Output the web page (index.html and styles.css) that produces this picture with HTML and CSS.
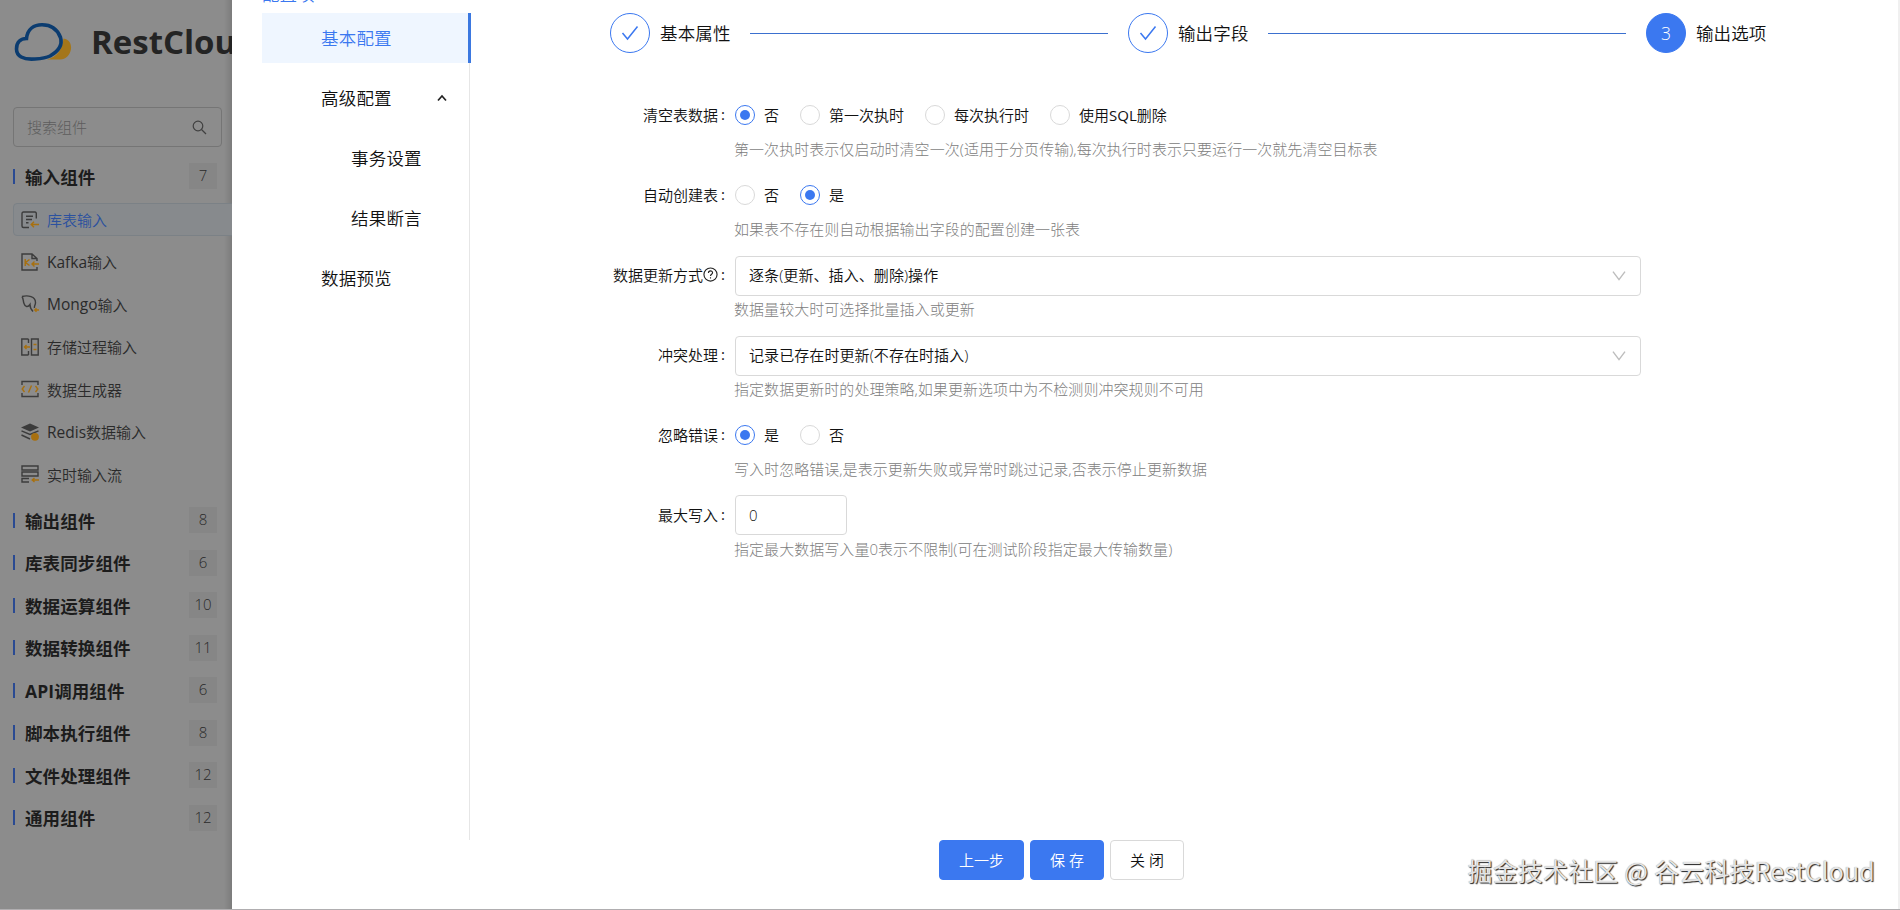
FILE: index.html
```html
<!DOCTYPE html>
<html lang="zh-CN">
<head>
<meta charset="utf-8">
<title>RestCloud</title>
<link rel="stylesheet" href="styles.css">
</head>
<body>
<div class="app">
  <aside class="sidebar">
    <div class="brand">
      <svg class="brand-mark" width="60" height="42" viewBox="0 0 60 42" fill="none">
        <path d="M34 38.500C44 36 49 29 50.500 17.500C56 18 58.500 23 58 28C57 34 53 38.500 47 38.500Z" fill="#a4761a"/>
        <path d="M22 38C10 39 3.500 35 3.500 28C3.500 21 8 17.500 13.500 17.500C14.500 8 21 3.800 29 3.800C38 3.800 44.500 8.500 47.500 16.500C50 25 44 31 37 35C33 37 28 37.600 22 38Z" stroke="#0b3c70" stroke-width="3.6"/>
      </svg>
      <span class="brand-name">RestCloud</span>
    </div>
    <div class="search">
      <span>搜索组件</span>
      <svg width="15" height="15" viewBox="0 0 15 15" fill="none" stroke="#404040" stroke-width="1.2"><circle cx="6" cy="6" r="4.8"/><path d="M9.500 9.500L14 14"/></svg>
    </div>
    <div class="group"><span class="group-name">输入组件</span><span class="badge">7</span></div>
    <ul class="items">
      <li class="item active"><svg class="ico" viewBox="0 0 18 18"><path d="M15.300 7.500V2.500Q15.300 1 14 1H2.500Q1 1 1 2.500V15Q1 16.500 2.500 16.500H8"/><path d="M5 5.200H12M5 8.500H11M5 11.800H7.500"/><path class="o" d="M18 13.500H10M13 10.800L10.200 13.500L13 16.200"/></svg>库表输入</li>
      <li class="item"><svg class="ico" viewBox="0 0 18 18"><path d="M16 8V5.500L11 1H1V17H16V14M11 1V5.500H16"/><path class="o" d="M4.200 6V13M8.500 6.500L4.500 9.500L8.500 12.500M18 11H11M13.500 8.500L11 11L13.500 13.500"/></svg><span class="latin">Kafka</span>输入</li>
      <li class="item"><svg class="ico" viewBox="0 0 18 18"><path d="M1 1.500C7 0 14.500 1.500 14.500 7.500C14.500 10 13 11 13.500 13M1 1.500C2.500 3.500 2 6 3 8.500C4 12 7 12.500 9 9.500C9 13 10 14.500 12 16.500"/><path class="o" d="M18 15H13.500M15.500 13.200L13.700 15L15.500 16.800"/></svg><span class="latin">Mongo</span>输入</li>
      <li class="item"><svg class="ico" viewBox="0 0 18 18"><path d="M7.500 1H.8V17H7.500M7.500 1V5M7.500 13V17M10.500 1H17.200V17H10.500Z"/><path class="o" d="M9 9H3.500M5.500 7L3.500 9L5.500 11M12.500 6.500H15.500M12.500 11.500H15.500"/></svg>存储过程输入</li>
      <li class="item"><svg class="ico" viewBox="0 0 18 18"><path d="M1 5V1.500H17V5M1 13V16.500H17V13"/><path class="o" d="M3.500 6L1.200 9L3.500 12M14.500 6L16.800 9L14.500 12M10.500 5.500L7.500 12.500"/></svg>数据生成器</li>
      <li class="item"><svg class="ico" viewBox="0 0 18 18"><path class="f" d="M9 .5L18 4.500L9 8.500L0 4.500Z"/><path d="M.5 7.800L9 11.500L17.500 7.800M.5 12L9 16"/><circle class="c" cx="14" cy="13.800" r="3.900"/></svg><span class="latin">Redis</span>数据输入</li>
      <li class="item"><svg class="ico" viewBox="0 0 18 18"><path d="M1 1H17V5H1ZM1 7H17V11H1ZM8 13.500H1V17H8"/><path class="o" d="M18 15H11M13.500 13L11.200 15L13.500 17"/></svg>实时输入流</li>
    </ul>
    <div class="group"><span class="group-name">输出组件</span><span class="badge">8</span></div>
    <div class="group"><span class="group-name">库表同步组件</span><span class="badge">6</span></div>
    <div class="group"><span class="group-name">数据运算组件</span><span class="badge">10</span></div>
    <div class="group"><span class="group-name">数据转换组件</span><span class="badge">11</span></div>
    <div class="group"><span class="group-name">API调用组件</span><span class="badge">6</span></div>
    <div class="group"><span class="group-name">脚本执行组件</span><span class="badge">8</span></div>
    <div class="group"><span class="group-name">文件处理组件</span><span class="badge">12</span></div>
    <div class="group"><span class="group-name">通用组件</span><span class="badge">12</span></div>
  </aside>

  <main class="drawer">
    <nav class="menu">
      <div class="tab-title">配置项</div>
      <div class="menu-list">
        <div class="menu-item selected"><span>基本配置</span></div>
        <div class="menu-item"><span>高级配置</span>
          <svg class="caret" width="10" height="8" viewBox="0 0 10 8" fill="none" stroke="#222" stroke-width="1.7"><path d="M1 6.500L5 2L9 6.500"/></svg>
        </div>
        <div class="menu-item sub"><span>事务设置</span></div>
        <div class="menu-item sub"><span>结果断言</span></div>
        <div class="menu-item"><span>数据预览</span></div>
      </div>
    </nav>

    <section class="content">
      <div class="steps">
        <div class="step"><span class="dot"><svg width="18" height="16" viewBox="0 0 18 16" fill="none" stroke="#3b78f0" stroke-width="1.5"><path d="M1.500 8L6.500 14L16.500 1.500"/></svg></span><span class="step-name">基本属性</span></div>
        <i class="rail"></i>
        <div class="step"><span class="dot"><svg width="18" height="16" viewBox="0 0 18 16" fill="none" stroke="#3b78f0" stroke-width="1.5"><path d="M1.500 8L6.500 14L16.500 1.500"/></svg></span><span class="step-name">输出字段</span></div>
        <i class="rail"></i>
        <div class="step"><span class="dot current">3</span><span class="step-name">输出选项</span></div>
      </div>

      <div class="form">
        <div class="row">
          <div class="label">清空表数据<b>:</b></div>
          <div class="field">
            <div class="control"><label class="radio on"><i></i>否</label><label class="radio"><i></i>第一次执时</label><label class="radio"><i></i>每次执行时</label><label class="radio"><i></i><span>使用<span class="latin">SQL</span>删除</span></label></div>
            <p class="hint">第一次执时表示仅启动时清空一次(适用于分页传输),每次执行时表示只要运行一次就先清空目标表</p>
          </div>
        </div>
        <div class="row">
          <div class="label">自动创建表<b>:</b></div>
          <div class="field">
            <div class="control"><label class="radio"><i></i>否</label><label class="radio on"><i></i>是</label></div>
            <p class="hint">如果表不存在则自动根据输出字段的配置创建一张表</p>
          </div>
        </div>
        <div class="row">
          <div class="label">数据更新方式<svg class="help" width="15" height="15" viewBox="0 0 16 16" fill="none" stroke="#222" stroke-width="1.2"><circle cx="8" cy="8" r="7"/><path d="M5.800 6.400C5.800 3.400 10.200 3.400 10.200 6.200C10.200 7.800 8 7.800 8 9.600M8 11V12.300"/></svg><b>:</b></div>
          <div class="field">
            <div class="box select"><span>逐条(更新、插入、删除)操作</span><svg width="14" height="10" viewBox="0 0 14 10" fill="none" stroke="#bdbdbd" stroke-width="1.4"><path d="M1 .7L7 8.700L13 .7"/></svg></div>
            <p class="hint tight">数据量较大时可选择批量插入或更新</p>
          </div>
        </div>
        <div class="row">
          <div class="label">冲突处理<b>:</b></div>
          <div class="field">
            <div class="box select"><span>记录已存在时更新(不存在时插入)</span><svg width="14" height="10" viewBox="0 0 14 10" fill="none" stroke="#bdbdbd" stroke-width="1.4"><path d="M1 .7L7 8.700L13 .7"/></svg></div>
            <p class="hint tight">指定数据更新时的处理策略,如果更新选项中为不检测则冲突规则不可用</p>
          </div>
        </div>
        <div class="row">
          <div class="label">忽略错误<b>:</b></div>
          <div class="field">
            <div class="control"><label class="radio on"><i></i>是</label><label class="radio"><i></i>否</label></div>
            <p class="hint">写入时忽略错误,是表示更新失败或异常时跳过记录,否表示停止更新数据</p>
          </div>
        </div>
        <div class="row">
          <div class="label">最大写入<b>:</b></div>
          <div class="field">
            <div class="box number latin">0</div>
            <p class="hint tight">指定最大数据写入量0表示不限制(可在测试阶段指定最大传输数量)</p>
          </div>
        </div>
      </div>

      <div class="actions">
        <span class="btn primary wide">上一步</span>
        <span class="btn primary">保 存</span>
        <span class="btn">关 闭</span>
      </div>
    </section>
  </main>
  <div class="watermark">掘金技术社区 @ 谷云科技RestCloud</div>
</div>
</body>
</html>
```
FILE: styles.css
```css
* { box-sizing: border-box; }
body {
  margin: 0;
  font-family: "Open Sans", "Noto Sans CJK SC", sans-serif;
  font-size: 15px;
  color: #111;
}
.app {
  position: relative;
  display: flex;
  width: 1900px;
  height: 910px;
  overflow: hidden;
  background: #fff;
  border-bottom: 1px solid #b0aeb0;
}
.latin { font-weight: 400; }

/* sidebar, dimmed by the drawer */
.sidebar {
  width: 232px;
  height: 910px;
  flex: none;
  overflow: hidden;
  padding-left: 13px;
  background: linear-gradient(90deg, transparent 224px, #7c7c7c 232px), #8c8c8c;
}
.brand {
  display: flex;
  align-items: center;
  height: 84px;
  width: 260px;
}
.brand-mark { flex: none; }
.brand-name {
  margin-left: 18px;
  font: 700 33px/40px "Open Sans", sans-serif;
  color: #242424;
}
.search {
  display: flex;
  align-items: center;
  justify-content: space-between;
  width: 209px;
  height: 40px;
  margin-top: 23px;
  padding: 0 14px 0 13px;
  border: 1px solid #757575;
  border-radius: 4px;
  color: #5c5c5c;
  font-weight: 300;
}
.search span { margin-top: -2px; }
.group {
  display: flex;
  align-items: center;
  justify-content: space-between;
  width: 204px;
  height: 42.5px;
}
.search + .group { margin-top: 8px; height: 42px; }
.group-name {
  display: flex;
  align-items: center;
  font-size: 17.5px;
  font-weight: 700;
  letter-spacing: .1px;
  color: #1c1c1c;
}
.group-name::before {
  content: "";
  width: 2px;
  height: 15px;
  margin-right: 10px;
  background: #2a4a92;
}
.badge {
  width: 28px;
  height: 26px;
  background: #868686;
  color: #2a2a2a;
  text-align: center;
  line-height: 25px;
  font-weight: 300;
}
.items { list-style: none; margin: 0 0 3.5px; padding: 6px 0 0; }
.item {
  display: flex;
  align-items: center;
  height: 42.5px;
  padding-left: 8px;
  color: #2a2a2a;
  font-weight: 350;
}
.item .latin { font-size: 15.5px; }
.item.active {
  height: 33px;
  width: 240px;
  margin: 0 0 4.5px;
  padding-left: 7px;
  border: 1px solid #7b8186;
  border-radius: 4px;
  background: #878a8d;
  color: #2b519f;
}
.ico {
  width: 18px;
  height: 18px;
  margin-right: 8px;
  fill: none;
  stroke: #3c3c3c;
  stroke-width: 1.4;
}
.ico .o { stroke: #a8700f; }
.ico .f { fill: #3c3c3c; stroke: none; }
.ico .c { fill: #a8700f; stroke: none; }

/* drawer */
.drawer {
  display: flex;
  flex: 1;
  padding-left: 30px;
  border-right: 2px solid #f0f0f0;
}
.menu { width: 209px; height: 840px; flex: none; }
.tab-title {
  height: 13px;
  padding-bottom: 8px;
  display: flex;
  align-items: flex-end;
  overflow: hidden;
  font-size: 17.5px;
  line-height: 22px;
  color: #3b78f0;
  font-weight: 350;
}
.menu-list {
  height: 827px;
  background: linear-gradient(#e6e6e6, #e6e6e6) 207px 0 / 1px 100% no-repeat;
}
.menu-item {
  display: flex;
  align-items: center;
  height: 50px;
  margin-bottom: 10px;
  padding: 0 24px 0 59px;
  font-size: 17.5px;
  font-weight: 350;
  letter-spacing: .2px;
}
.menu-item span, .step-name { margin-top: -2px; }
.box span { margin-top: -3px; }
.menu-item.sub { padding-left: 89px; }
.menu-item.selected {
  background: #eff6ff;
  border-right: 3px solid #3b78e0;
  color: #3b78f0;
}
.caret { margin-left: auto; }

.content { flex: 1; display: flex; flex-direction: column; }
.steps {
  display: flex;
  align-items: center;
  width: 1156.5px;
  height: 40px;
  margin: 13px 0 0 139px;
  font-size: 17.5px;
}
.step { display: flex; align-items: center; gap: 10px; white-space: nowrap; font-weight: 350; }
.step-name { letter-spacing: .15px; }
.dot {
  display: flex;
  align-items: center;
  justify-content: center;
  width: 40px;
  height: 40px;
  border: 1px solid #3b78f0;
  border-radius: 50%;
}
.dot.current { background: #3b78f0; color: #fff; padding-bottom: 1px; }
.rail { flex: 1; height: 1px; margin: 1px 20px 0 19px; background: #3b70cf; }

.form { margin-top: 42px; }
.row { display: flex; height: 80px; }
.label {
  display: flex;
  align-items: center;
  justify-content: flex-end;
  width: 264px;
  height: 38px;
  padding-right: 10px;
  font-weight: 350;
}
.label b { width: 7px; text-align: right; font-weight: 400; }
.control { display: flex; align-items: center; gap: 21px; height: 40px; }
.radio { display: flex; align-items: center; gap: 9px; font-weight: 350; line-height: 20px; }
.radio i {
  display: flex;
  width: 20px;
  height: 20px;
  border: 1px solid #d9d9d9;
  border-radius: 50%;
}
.radio.on i { border-color: #3b78f0; }
.radio.on i::before {
  content: "";
  width: 10px;
  height: 10px;
  margin: auto;
  border-radius: 50%;
  background: #3b78f0;
}
.hint {
  margin: 3px 0 0 -1px;
  line-height: 22px;
  letter-spacing: .05px;
  color: #808080;
  font-weight: 300;
  white-space: nowrap;
}
.hint.tight { margin-top: 2px; }
.box {
  display: flex;
  align-items: center;
  height: 40px;
  margin-top: 1px;
  padding: 0 14px 0 13px;
  border: 1px solid #d9d9d9;
  border-radius: 4px;
  font-weight: 350;
  letter-spacing: .08px;
}
.select { width: 906px; justify-content: space-between; }
.number { width: 112px; margin-top: 0; }
.number + .hint { margin-top: 3px; }

.actions { display: flex; gap: 6px; margin: 265px 0 0 468px; }
.btn {
  display: flex;
  align-items: center;
  justify-content: center;
  width: 74px;
  height: 40px;
  padding-bottom: 2px;
  border: 1px solid #d9d9d9;
  border-radius: 4px;
  font-weight: 350;
}
.btn.primary { background: #3b78f0; border-color: #3b78f0; color: #fff; }
.btn.wide { width: 85px; }

.watermark {
  position: absolute;
  right: 25px;
  bottom: 21px;
  font: 400 25px/36px "Noto Sans CJK SC", sans-serif;
  letter-spacing: .17px;
  color: #e4e4e4;
  text-shadow: 1px 1px 1px #222, 0 0 1px #999;
  white-space: nowrap;
}
```
